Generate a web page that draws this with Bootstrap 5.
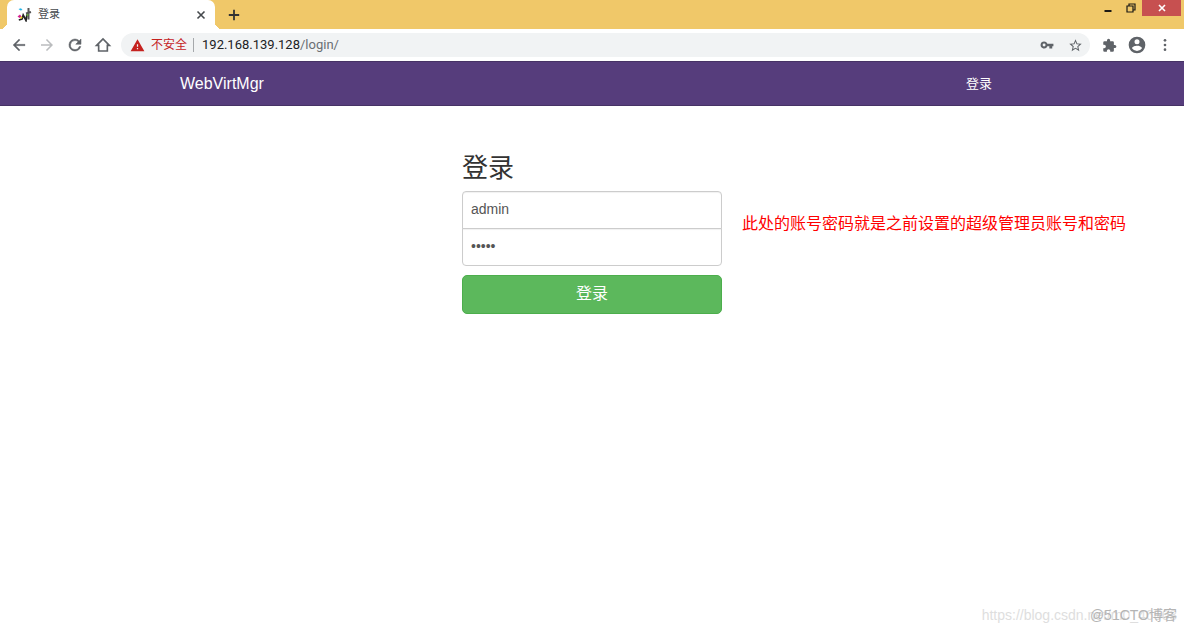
<!DOCTYPE html>
<html lang="zh-CN">
<head>
<meta charset="utf-8">
<meta name="viewport" content="width=device-width, initial-scale=1">
<title>登录</title>
<link href="https://cdn.jsdelivr.net/npm/bootstrap@5.3.0/dist/css/bootstrap.min.css" rel="stylesheet">
<style>
  body { font-family: "Liberation Sans", "Noto Sans CJK SC", sans-serif; color: #333; }
  .plain-btn { background: none; border: 0; padding: 0; display: flex; align-items: center; justify-content: center; color: #5f6368; }
  .plain-btn svg, .tab-icon { display: block; }
  .tab-strip { background: #f0c869; height: 29px; padding-left: 7px; }
  .browser-tab { width: 208px; height: 29px; background: #fff; border-radius: 7px 7px 0 0; padding: 0 9px 0 10px; gap: 6px; font-size: 11px; color: #45494d; position: relative; }
  .browser-tab::before, .browser-tab::after { content: ""; position: absolute; bottom: 0; width: 7px; height: 7px; }
  .browser-tab::before { right: 100%; background: radial-gradient(circle at 0 0, transparent 7px, #fff 7px); }
  .browser-tab::after { left: 100%; background: radial-gradient(circle at 100% 0, transparent 7px, #fff 7px); }
  .new-tab { width: 38px; height: 29px; color: #333; }
  .win-btn { width: 23px; height: 16px; color: #1c1a15; }
  .win-close { width: 39px; background: #c75050; color: #fff; margin: 0 3px 0 0; }
  .toolbar { height: 32px; padding: 0 5px 0 9px; }
  .tool { width: 28px; height: 28px; }
  .tool-nav { width: 20px; margin-right: 8px; }
  .omnibox { background: #f1f3f4; height: 24px; border-radius: 12px; padding: 0 1px 0 9px; margin: 0 5px 0 0; font-size: 12px; min-width: 0; }
  .insecure { color: #c5221f; gap: 6px; padding-right: 6px; }
  .url-rule { width: 1px; height: 14px; background: #a5a8ab; margin-right: 8px; }
  .url-field { font-family: Roboto, sans-serif; font-size: 13px; line-height: 20px; color: #202124; text-decoration: none; }
  .url-field span { color: #6a6e73; }
  .site-nav { background: #563d7c; border-top: 1px solid #463265; border-bottom: 1px solid #463265; height: 45px; padding: 0; }
  .site-inner { max-width: 824px; padding: 0; }
  .site-nav .navbar-brand { font-size: 16px; color: #fff; padding: 0; margin: 0; }
  .site-nav .nav-link { font-size: 13px; color: #fff; padding: 0 12px; }
  .login-row { padding-top: 44px; display: grid; grid-template-columns: 1fr 260px 1fr; column-gap: 20px; }
  .login-form { grid-column: 2; }
  .login-form h1 { font-size: 26px; line-height: 36px; font-weight: 400; margin: 0 0 5px; color: #333; }
  .login-form .form-control { height: 38px; padding: 7px 8px 9px; font-size: 14px; line-height: 20px; color: #555; border-color: #ccc; box-shadow: inset 0 1px 1px rgba(0,0,0,.06); }
  .login-form .first-field { border-radius: 4px 4px 0 0; }
  .login-form .second-field { border-radius: 0 0 4px 4px; margin-top: -1px; }
  .login-form .btn { height: 39px; margin-top: 9px; padding: 0 0 2px; font-size: 16px; border-radius: 5px; background: #5cb85c; border-color: #4cae4c; color: #fff; }
  .hint { color: #f00; font-size: 16px; line-height: 24px; padding-top: 62px; white-space: nowrap; }
  .watermark { font-size: 14px; line-height: 20px; padding: 0 7px 6px; white-space: nowrap; }
  .mark-url { color: #dedede; }
  .mark-brand { position: absolute; right: 7px; top: 0; color: #b4b4b4; }
</style>
</head>
<body class="d-flex flex-column min-vh-100 bg-white">
<header>
  <div class="tab-strip d-flex">
    <div class="browser-tab d-flex align-items-center">
      <svg class="tab-icon" width="15" height="15" viewBox="0 0 15 15" aria-hidden="true">
        <path d="M1.500 2 4 1.200 5.500 3 3.500 3.400z" fill="#20b5e8"/>
        <path d="M.5 9.500 3 7.500l1.500 2L2.500 11z" fill="#d6218f"/>
        <path d="M1.800 13 5 12l1.200-4L9 13.500l1-6" fill="none" stroke="#222" stroke-width="1.700"/>
        <path d="M3.500 11.500 5 9.800" stroke="#e8c91d" stroke-width="1.700"/>
        <path d="M11.500 1v11.500M9 6.500l5-1.500" fill="none" stroke="#555" stroke-width="2"/>
        <path d="m10 9 1-2" stroke="#63ad36" stroke-width="1.500"/>
      </svg>
      <span class="flex-grow-1">登录</span>
      <button class="plain-btn" aria-label="关闭标签页"><svg width="10" height="10" viewBox="0 0 10 10" stroke="#45494d" stroke-width="1.600"><path d="m1.500 1.500 7 7m0-7-7 7"/></svg></button>
    </div>
    <button class="plain-btn new-tab" aria-label="新标签页"><svg width="12" height="12" viewBox="0 0 12 12" stroke="#333" stroke-width="1.800"><path d="M6 .8v10.400M.8 6h10.400"/></svg></button>
    <div class="d-flex ms-auto">
      <button class="plain-btn win-btn" aria-label="最小化"><svg width="10" height="10" viewBox="0 0 10 10"><path d="M1.500 7h7v2h-7z" fill="#1c1a15"/></svg></button>
      <button class="plain-btn win-btn" aria-label="还原"><svg width="10" height="10" viewBox="0 0 10 10" fill="none" stroke="#1c1a15"><path d="M1 3h6v6H1zM3 2.500V1h6v6H7.500" stroke-width="1.200"/></svg></button>
      <button class="plain-btn win-btn win-close" aria-label="关闭"><svg width="8" height="8" viewBox="0 0 8 8" stroke="#fff" stroke-width="1.600"><path d="m1 1 6 6m0-6L1 7"/></svg></button>
    </div>
  </div>
  <div class="toolbar d-flex align-items-center">
    <button class="plain-btn tool tool-nav" aria-label="后退"><svg width="18" height="18" viewBox="0 0 24 24" fill="currentColor" stroke="currentColor" stroke-width=".4"><path d="M20 11H7.830l5.590-5.590L12 4l-8 8 8 8 1.410-1.410L7.830 13H20z"/></svg></button>
    <button class="plain-btn tool tool-nav" aria-label="前进"><svg width="18" height="18" viewBox="0 0 24 24" fill="#babcbe"><path d="m12 4-1.410 1.410L16.170 11H4v2h12.170l-5.580 5.590L12 20l8-8z"/></svg></button>
    <button class="plain-btn tool tool-nav" aria-label="重新加载"><svg width="18" height="18" viewBox="0 0 24 24" fill="currentColor" stroke="currentColor" stroke-width=".7"><path d="M17.650 6.350A7.960 7.960 0 0 0 12 4a8 8 0 1 0 7.730 10h-2.080A6 6 0 1 1 12 6c1.660 0 3.140.69 4.220 1.780L13 11h7V4z"/></svg></button>
    <button class="plain-btn tool tool-nav" aria-label="主页"><svg width="18" height="18" viewBox="0 0 24 24" fill="none" stroke="currentColor" stroke-width="2.200"><path d="M3.500 12.500 12 4l8.500 8.500h-2.700V20H6.200v-7.500z"/></svg></button>
    <div class="omnibox d-flex align-items-center flex-grow-1">
      <div class="insecure d-flex align-items-center">
        <svg width="15" height="15" viewBox="0 0 24 24" fill="currentColor" aria-hidden="true"><path d="M1 21h22L12 2zm12-3h-2v-2h2zm0-4h-2v-4h2z"/></svg>
        <span>不安全</span>
      </div>
      <span class="url-rule"></span>
      <a class="url-field" href="#">192.168.139.128<span>/login/</span></a>
      <button class="plain-btn tool ms-auto" aria-label="密码"><svg width="14" height="14" viewBox="0 0 24 24" fill="currentColor"><path d="M12.650 10A6 6 0 0 0 7 6a6 6 0 1 0 5.650 8H16v4h5v-4h2v-4zM7 14.500a2.500 2.500 0 1 1 0-5 2.500 2.500 0 0 1 0 5z"/></svg></button>
      <button class="plain-btn tool" aria-label="收藏"><svg width="15" height="15" viewBox="0 0 24 24" fill="currentColor"><path d="m22 9.240-7.190-.62L12 2 9.190 8.630 2 9.240l5.460 4.730L5.820 21 12 17.270 18.180 21l-1.630-7.030zM12 15.400l-3.760 2.270 1-4.280-3.320-2.880 4.380-.38L12 6.100l1.710 4.040 4.380.38-3.320 2.880 1 4.280z"/></svg></button>
    </div>
    <button class="plain-btn tool" aria-label="扩展程序"><svg width="15" height="15" viewBox="0 0 24 24" fill="currentColor"><path d="M20.500 11H19V7a2 2 0 0 0-2-2h-4V3.500a2.500 2.500 0 0 0-5 0V5H4a2 2 0 0 0-2 2v3.800h1.500a2.700 2.700 0 0 1 0 5.400H2V20a2 2 0 0 0 2 2h3.800v-1.500a2.700 2.700 0 0 1 5.400 0V22H17a2 2 0 0 0 2-2v-4h1.500a2.500 2.500 0 0 0 0-5z"/></svg></button>
    <button class="plain-btn tool" aria-label="用户"><svg width="20" height="20" viewBox="0 0 24 24" fill="currentColor"><path d="M12 2a10 10 0 1 0 0 20 10 10 0 0 0 0-20zm0 3a3 3 0 1 1 0 6 3 3 0 0 1 0-6zm0 14.200a7.200 7.200 0 0 1-6-3.220c.03-1.990 4-3.080 6-3.080s5.970 1.090 6 3.080a7.200 7.200 0 0 1-6 3.220z"/></svg></button>
    <button class="plain-btn tool" aria-label="菜单"><svg width="16" height="16" viewBox="0 0 24 24" fill="currentColor"><circle cx="12" cy="5" r="2"/><circle cx="12" cy="12" r="2"/><circle cx="12" cy="19" r="2"/></svg></button>
  </div>
</header>
<nav class="navbar navbar-expand site-nav">
  <div class="container site-inner">
    <a class="navbar-brand" href="#">WebVirtMgr</a>
    <div class="navbar-nav pe-1"><a class="nav-link" href="#">登录</a></div>
  </div>
</nav>
<main class="flex-grow-1">
  <div class="login-row">
    <form class="login-form">
      <h1>登录</h1>
      <input class="form-control first-field" type="text" value="admin" aria-label="用户名">
      <input class="form-control second-field" type="password" value="admin" aria-label="密码">
      <button class="btn w-100" type="button">登录</button>
    </form>
    <p class="hint mb-0">此处的账号密码就是之前设置的超级管理员账号和密码</p>
  </div>
</main>
<footer class="d-flex justify-content-end">
  <div class="watermark position-relative">
    <span class="mark-url">https://blog.csdn.net/m0_46563</span>
    <span class="mark-brand">@51CTO博客</span>
  </div>
</footer>
<script src="https://cdn.jsdelivr.net/npm/bootstrap@5.3.0/dist/js/bootstrap.bundle.min.js"></script>
</body>
</html>
